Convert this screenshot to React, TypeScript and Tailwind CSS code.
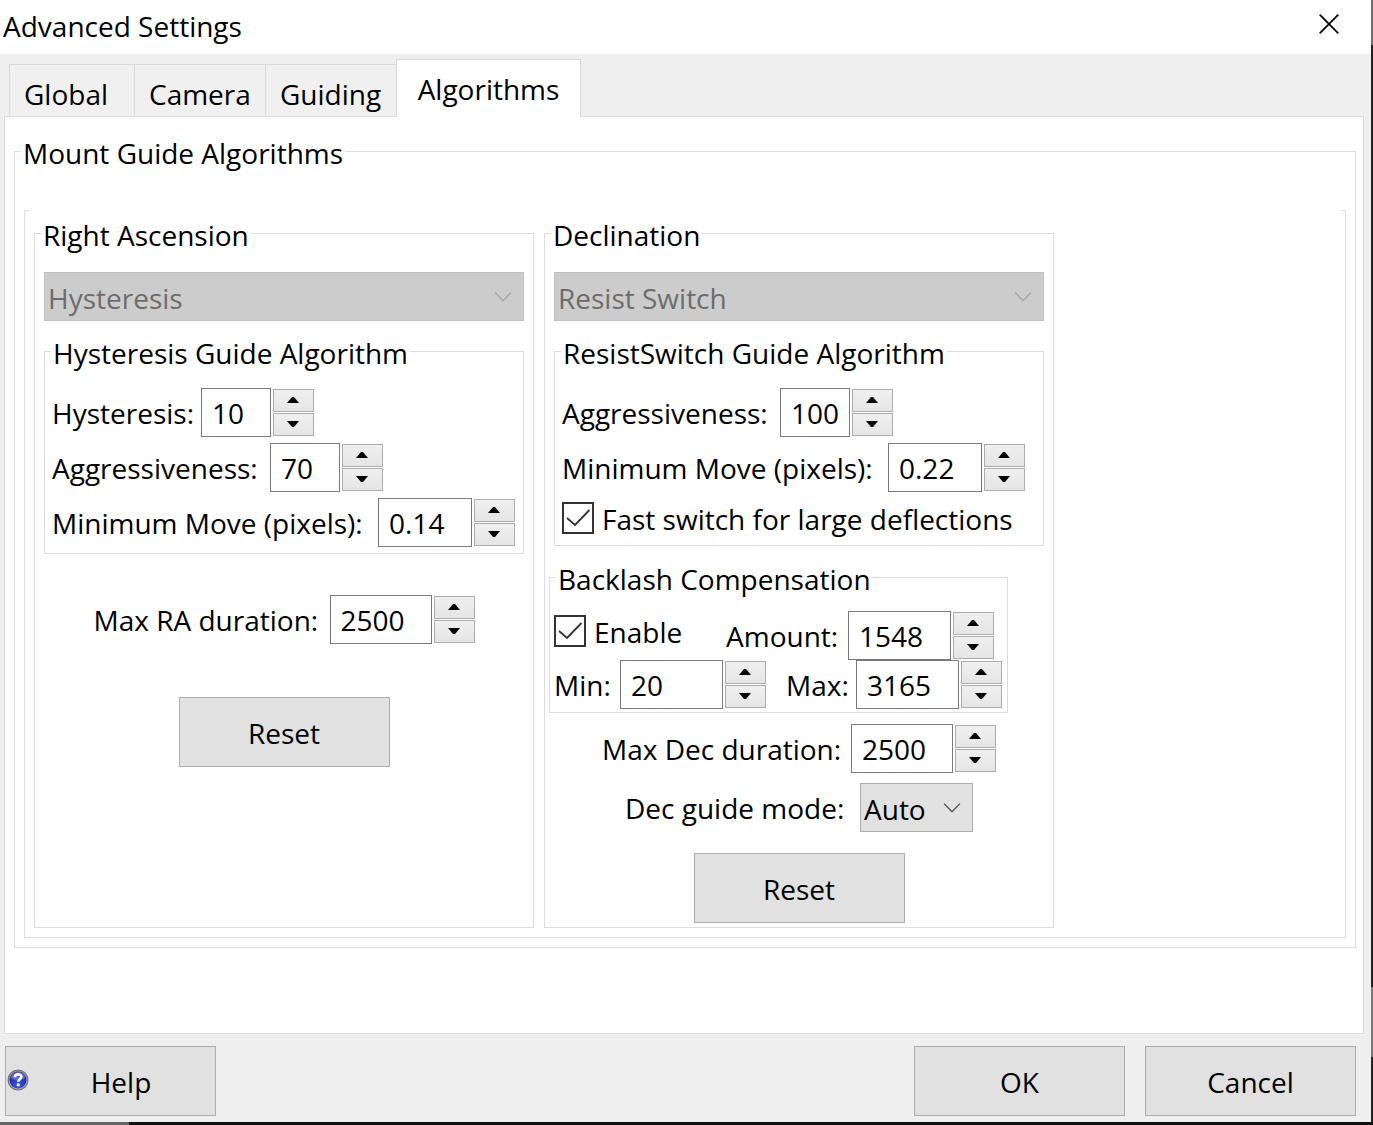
import { useState, type ReactNode } from "react";

function Group({
  title,
  className = "",
  inner = "",
  children,
}: {
  title: string;
  className?: string;
  inner?: string;
  children: ReactNode;
}) {
  return (
    <fieldset className={`min-w-0 border border-[#dcdcdc] ${className}`}>
      <legend className="ml-[6px] px-[2px] pt-1 leading-8 whitespace-nowrap">{title}</legend>
      <div className={`flow-root ${inner}`}>{children}</div>
    </fieldset>
  );
}

function Arrow({ down = false }: { down?: boolean }) {
  return (
    <svg width="12" height="6" viewBox="0 0 12 6" aria-hidden="true">
      <path d={down ? "M0 0h12L7 6H5z" : "M0 6h12L7 0H5z"} fill="#000" />
    </svg>
  );
}

type SpinProps = {
  id: string;
  label: string;
  initial: string;
  step?: number;
  labelClass?: string;
  inputClass: string;
};

function Spin({ id, label, initial, step = 1, labelClass = "", inputClass }: SpinProps) {
  const [value, setValue] = useState(initial);
  const change = (by: number) =>
    setValue((v) => (step < 1 ? (Number(v) + by).toFixed(2) : String(Number(v) + by)));
  const button =
    "flex h-[23px] w-full items-center justify-center border border-[#acacac] bg-linear-to-b from-[#f0f0f0] to-[#e5e5e5] pr-px pb-px";
  return (
    <div className="flex items-center">
      <label htmlFor={id} className={`shrink-0 whitespace-nowrap ${labelClass}`}>
        {label}
      </label>
      <input
        id={id}
        value={value}
        onChange={(e) => setValue(e.target.value)}
        inputMode="decimal"
        className={`h-[49px] shrink-0 border border-[#7a7a7a] bg-white pl-[10px] outline-none ${inputClass}`}
      />
      <div className="ml-[2px] flex w-[41px] flex-col gap-px">
        <button type="button" aria-label={`Increase ${label}`} className={button} onClick={() => change(step)}>
          <Arrow />
        </button>
        <button type="button" aria-label={`Decrease ${label}`} className={button} onClick={() => change(-step)}>
          <Arrow down />
        </button>
      </div>
    </div>
  );
}

function Check({ id, label }: { id: string; label: string }) {
  return (
    <div className="flex items-center gap-2">
      <span className="grid size-8 shrink-0">
        <input
          id={id}
          type="checkbox"
          defaultChecked
          className="peer col-start-1 row-start-1 size-8 appearance-none border-2 border-[#333] bg-white"
        />
        <svg
          viewBox="0 0 32 32"
          aria-hidden="true"
          className="pointer-events-none invisible col-start-1 row-start-1 size-8 peer-checked:visible"
        >
          <path d="M5 16l8 7L27.500 8" fill="none" stroke="#333" strokeWidth="1.800" />
        </svg>
      </span>
      <label htmlFor={id} className="pt-[2px] whitespace-nowrap">
        {label}
      </label>
    </div>
  );
}

function Choice({
  id,
  options,
  label,
  disabled = false,
  className = "",
}: {
  id: string;
  options: string[];
  label: string;
  disabled?: boolean;
  className?: string;
}) {
  return (
    <div className={`grid items-center ${className}`}>
      <select
        id={id}
        aria-label={label}
        disabled={disabled}
        className="col-start-1 row-start-1 h-[49px] w-full appearance-none border border-[#adadad] bg-[#e1e1e1] pt-[2px] pl-[3px] text-black opacity-100 disabled:border-[#bfbfbf] disabled:bg-[#ccc] disabled:text-[#6d6d6d]"
      >
        {options.map((o) => (
          <option key={o}>{o}</option>
        ))}
      </select>
      <svg
        width="18"
        height="10"
        viewBox="0 0 18 10"
        aria-hidden="true"
        className={`pointer-events-none col-start-1 row-start-1 mr-3 justify-self-end ${disabled ? "text-[#a3a3a3]" : "text-[#444]"}`}
      >
        <path d="M1 .700l8 8 8-8" fill="none" stroke="currentColor" strokeWidth="1.200" />
      </svg>
    </div>
  );
}

function PushButton({ children, className = "" }: { children: ReactNode; className?: string }) {
  return (
    <button
      type="button"
      className={`h-[70px] w-[211px] border border-[#adadad] bg-[#e1e1e1] pt-[2px] ${className}`}
    >
      {children}
    </button>
  );
}

function HelpIcon() {
  return (
    <svg width="22" height="22" viewBox="0 0 22 22" aria-hidden="true">
      <defs>
        <radialGradient id="ball" cx="50%" cy="75%" r="70%">
          <stop offset="0" stopColor="#3d5cf0" />
          <stop offset="1" stopColor="#1a1f8c" />
        </radialGradient>
      </defs>
      <circle cx="11" cy="11" r="10.500" fill="#77777c" />
      <circle cx="11" cy="11" r="9.200" fill="#a9a9c4" />
      <circle cx="11" cy="11" r="8.500" fill="url(#ball)" />
      <path d="M3.500 9a7.600 7.600 0 0 1 15 0q-7.500 4-15 0z" fill="#fff" opacity=".28" />
      <path d="M7.800 8.200c.2-4 6.800-3.700 6.600-.2-.1 2.200-3.200 2.300-3.200 4.800" fill="none" stroke="#fff" strokeWidth="2.600" />
      <circle cx="11.200" cy="15.900" r="1.600" fill="#fff" />
    </svg>
  );
}

const tabs = [
  { name: "Global", size: "w-[126px] pl-[14px]" },
  { name: "Camera", size: "w-[132px] pl-[14px]" },
  { name: "Guiding", size: "w-[132px] pl-[14px]" },
];

export default function App() {
  return (
    <div className="flex min-h-screen flex-col bg-[#111] font-['Open_Sans','Noto_Sans',sans-serif] text-[28px] leading-9 text-black">
      <div className="flex flex-1">
        <main className="flex min-w-0 flex-1 flex-col bg-[#efefef]">
          <header className="flex h-[54px] items-center justify-between bg-white pb-[2px] pl-[3px]">
            <h1>Advanced Settings</h1>
            <button type="button" aria-label="Close" className="mr-8 mb-1 flex">
              <svg width="20" height="20" viewBox="0 0 20 20" aria-hidden="true">
                <path d="M.700.700l18.600 18.600M19.300.700L.700 19.300" stroke="#000" strokeWidth="1.800" />
              </svg>
            </button>
          </header>

          <div role="tablist" className="flex items-end pt-[5px] pl-[9px]">
            {tabs.map((t) => (
              <button
                key={t.name}
                type="button"
                role="tab"
                aria-selected="false"
                className={`-mr-px h-[52px] border border-b-0 border-[#d9d9d9] bg-[#f0f0f0] pt-[6px] text-left whitespace-nowrap ${t.size}`}
              >
                {t.name}
              </button>
            ))}
            <button
              type="button"
              role="tab"
              aria-selected="true"
              className="z-10 -mb-px h-[58px] w-[185px] border border-b-0 border-[#d9d9d9] bg-white pt-px whitespace-nowrap"
            >
              Algorithms
            </button>
          </div>

          <section className="mr-[7px] ml-1 flex-1 border border-[#dcdcdc] bg-white pt-4 pr-[7px] pb-4 pl-[9px]">
            <Group title="Mount Guide Algorithms" className="pb-[9px]">
              <fieldset className="mx-[9px] mt-[37px] border border-[#dcdcdc] px-[9px] pt-px pb-[9px]">
                <legend className="-ml-[5px] h-2 w-[calc(100%+10px)]" />
                <div className="flex gap-[10px]">
                  <Group title="Right Ascension" className="w-[500px]" inner="px-[9px]">
                    <Choice id="ra-algo" label="Right Ascension algorithm" options={["Hysteresis"]} disabled className="mt-[21px]" />
                    <Group title="Hysteresis Guide Algorithm" className="mt-3 pb-[6px]">
                      <div className="mt-[19px] flex flex-col gap-[6px] pl-[7px]">
                        <Spin id="hyst" label="Hysteresis:" initial="10" labelClass="w-[149px]" inputClass="w-[70px]" />
                        <Spin id="ra-aggr" label="Aggressiveness:" initial="70" labelClass="w-[218px]" inputClass="w-[70px]" />
                        <Spin id="ra-min" label="Minimum Move (pixels):" initial="0.14" step={0.01} labelClass="w-[326px]" inputClass="w-[94px]" />
                      </div>
                    </Group>
                    <div className="mt-[41px] flex justify-center">
                      <Spin id="ra-max" label="Max RA duration:" initial="2500" labelClass="w-[236px]" inputClass="w-[102px]" />
                    </div>
                    <PushButton className="mx-auto mt-[53px] block">Reset</PushButton>
                  </Group>

                  <Group title="Declination" className="w-[510px]" inner="px-1 pb-1">
                    <Choice id="dec-algo" label="Declination algorithm" options={["Resist Switch"]} disabled className="mx-[5px] mt-[21px]" />
                    <Group title="ResistSwitch Guide Algorithm" className="mx-[5px] mt-3 pb-2">
                      <div className="mt-[19px] flex flex-col gap-[6px] pl-[7px]">
                        <Spin id="dec-aggr" label="Aggressiveness:" initial="100" labelClass="w-[218px]" inputClass="w-[70px]" />
                        <Spin id="dec-min" label="Minimum Move (pixels):" initial="0.22" step={0.01} labelClass="w-[326px]" inputClass="w-[94px]" />
                      </div>
                      <div className="mt-[7px] pl-[7px]">
                        <Check id="fast" label="Fast switch for large deflections" />
                      </div>
                    </Group>
                    <Group title="Backlash Compensation" className="mt-[13px] w-[459px]" inner="pb-[3px] pl-1">
                      <div className="mt-4 flex">
                        <div className="w-[172px] pt-px">
                          <Check id="enable" label="Enable" />
                        </div>
                        <Spin id="amount" label="Amount:" initial="1548" labelClass="w-[122px]" inputClass="w-[103px]" />
                      </div>
                      <div className="flex gap-5">
                        <Spin id="min" label="Min:" initial="20" labelClass="w-[66px]" inputClass="w-[103px]" />
                        <Spin id="max" label="Max:" initial="3165" labelClass="w-[70px]" inputClass="w-[103px]" />
                      </div>
                    </Group>
                    <div className="mt-[11px] flex justify-center">
                      <Spin id="dec-max" label="Max Dec duration:" initial="2500" labelClass="w-[249px]" inputClass="w-[102px]" />
                    </div>
                    <div className="mt-[10px] flex items-center justify-center">
                      <label htmlFor="mode" className="w-[235px] whitespace-nowrap">
                        Dec guide mode:
                      </label>
                      <Choice id="mode" label="Dec guide mode" options={["Auto", "North", "South", "Off"]} className="w-[113px]" />
                    </div>
                    <PushButton className="mx-auto mt-[21px] block">Reset</PushButton>
                  </Group>
                </div>
              </fieldset>
            </Group>
          </section>

          <footer className="flex gap-5 pt-3 pr-[15px] pb-[6px] pl-[5px]">
            <PushButton className="mr-auto flex items-center">
              <span className="-mt-1 ml-px">
                <HelpIcon />
              </span>
              <span className="flex-1 pr-[2px] text-center">Help</span>
            </PushButton>
            <PushButton>OK</PushButton>
            <PushButton>Cancel</PushButton>
          </footer>
        </main>
        <div className="flex w-[2px] flex-col bg-[#222]">
          <div className="h-[45px] bg-[#707070]" />
          <div className="mt-auto mb-[65px] h-[70px] bg-[#777]" />
        </div>
      </div>
      <div className="h-[3px]">
        <div className="h-full w-[129px] bg-[#666]" />
      </div>
    </div>
  );
}
